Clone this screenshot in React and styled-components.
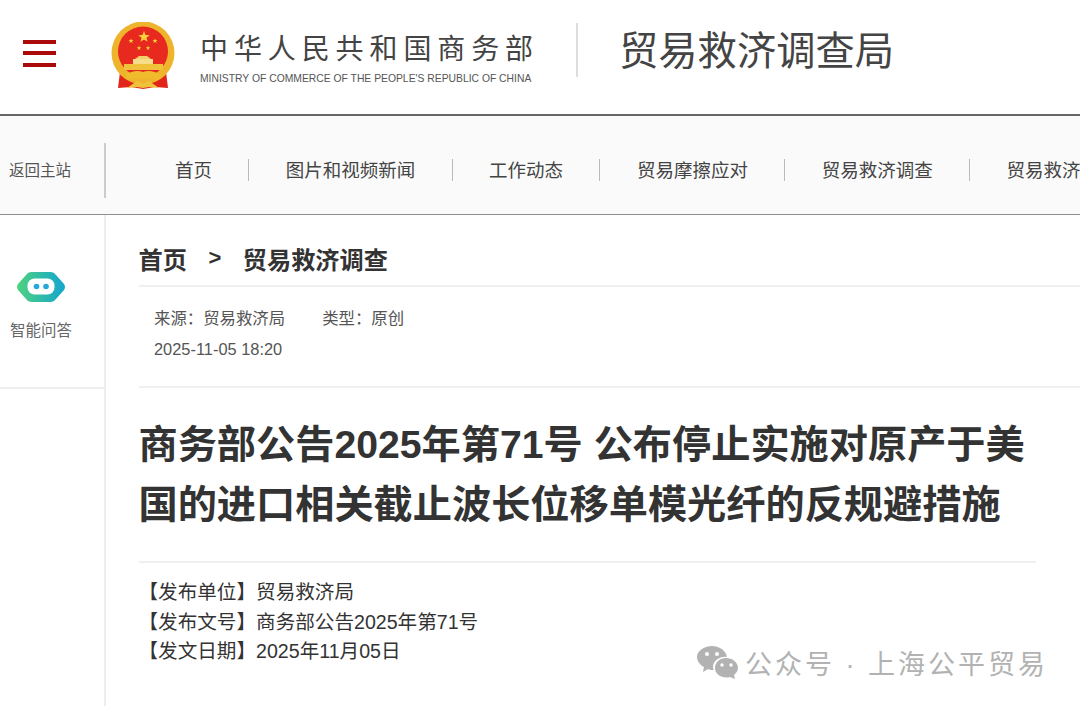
import React from 'react';
import styled, { createGlobalStyle } from 'styled-components';

const CJK = `"Liberation Sans", "Noto Sans CJK SC", sans-serif`;

const GlobalStyle = createGlobalStyle`
	html, body {
		margin: 0;
		padding: 0;
		background: #fff;
		overflow: hidden;
	}
	body {
		font-family: ${CJK};
		color: #333;
	}
`;

const Page = styled.div`
	position: relative;
	width: 1080px;
	height: 706px;
	overflow: hidden;
`;

const Header = styled.header`
	display: flex;
	align-items: center;
	height: 116px;
	box-sizing: border-box;
	padding-left: 23px;
	border-bottom: 2px solid #666;
`;

const Burger = styled.div`
	display: flex;
	flex-direction: column;
	gap: 7.5px;
	width: 33px;
	margin: 0 55px 8px 0;

	span {
		height: 4px;
		background: #ab0a0a;
	}
`;

const EmblemWrap = styled.div`
	display: flex;
	margin-bottom: 2px;
`;

const Brand = styled.div`
	width: 336px;
	margin: 4px 0 0 25px;

	.cn {
		font-size: 28px;
		line-height: 36px;
		letter-spacing: 5.9px;
		color: #444;
		white-space: nowrap;
	}

	.en {
		font-size: 10.35px;
		line-height: 14px;
		margin-top: 4px;
		color: #555;
		white-space: nowrap;
	}
`;

const Divider = styled.div`
	width: 2px;
	height: 54px;
	background: #ddd;
	margin: 0 41px 14px 40px;
`;

const Bureau = styled.div`
	font-size: 39.3px;
	color: #444;
	white-space: nowrap;
	margin-bottom: 20px;
`;

const Nav = styled.nav`
	display: flex;
	align-items: center;
	height: 99px;
	box-sizing: border-box;
	padding-top: 10px;
	background: #fafafa;
	border-bottom: 1px solid #8f8f8f;
	overflow: hidden;
`;

const Home = styled.div`
	display: flex;
	align-items: center;
	width: 106px;
	height: 55px;
	flex: none;
	box-sizing: border-box;
	padding: 0 0 2px 9px;
	border-right: 2px solid #ccc;
	font-size: 15.5px;
	color: #555;
`;

const NavList = styled.div`
	display: flex;
	align-items: center;
	padding-left: 32.6px;
`;

const NavItem = styled.div`
	flex: none;
	padding: 2px 36.4px 0;
	font-size: 18.5px;
	line-height: 20px;
	color: #444;
	white-space: nowrap;

	& + & {
		border-left: 1px solid #bbb;
	}
`;

const Body = styled.div`
	display: flex;
`;

const Side = styled.aside`
	width: 106px;
	height: 492px;
	flex: none;
	box-sizing: border-box;
	border-right: 2px solid #eee;
`;

const SideItem = styled.div`
	display: flex;
	flex-direction: column;
	align-items: center;
	height: 174px;
	box-sizing: border-box;
	padding: 57px 22px 0 0;
	border-bottom: 2px solid #eee;
	font-size: 15.5px;
	color: #666;

	svg {
		margin-bottom: 16px;
	}
`;

const Main = styled.main`
	flex: 1;
	padding: 0 44px 0 32.5px;
`;

const Crumbs = styled.div`
	display: flex;
	align-items: center;
	height: 72px;
	box-sizing: border-box;
	padding-top: 16px;
	border-bottom: 2px solid #f0f0f0;
	margin-right: -44px;
	font-size: 24.2px;
	font-weight: 700;
	color: #333;

	.sep {
		margin: 0 21.5px;
		font-size: 22px;
	}
`;

const Meta = styled.div`
	height: 101px;
	box-sizing: border-box;
	padding: 16px 0 0 15.5px;
	border-bottom: 2px solid #f0f0f0;
	margin-right: -44px;
	font-size: 16.4px;
	line-height: 31px;
	color: #555;

	span + span {
		margin-left: 37px;
	}
`;

const Title = styled.h1`
	margin: 0;
	padding: 27px 0 26px;
	border-bottom: 2px solid #f0f0f0;
	font-size: 39.2px;
	line-height: 60px;
	font-weight: 700;
	color: #333;
`;

const Info = styled.div`
	padding-top: 15px;
	font-size: 19.6px;
	line-height: 29.5px;
	color: #333;
`;

const Watermark = styled.div`
	position: absolute;
	left: 697px;
	top: 643px;
	display: flex;
	align-items: center;
	gap: 7px;
	font-size: 27px;
	letter-spacing: 3px;
	color: #b2b2b2;
	white-space: nowrap;
`;

function Star({ x, y, r }) {
	const pts = [];
	for (let i = 0; i < 10; i++) {
		const a = -Math.PI / 2 + (i * Math.PI) / 5;
		const rad = i % 2 ? r * 0.42 : r;
		pts.push(`${x + rad * Math.cos(a)},${y + rad * Math.sin(a)}`);
	}
	return <polygon points={pts.join(' ')} fill="#f6d33c" />;
}

function Emblem() {
	return (
		<svg width="64" height="68" viewBox="0 0 64 68">
			<path d="M9 50 L7 66 L20 65 L32 67 L44 65 L57 66 L55 50 Z" fill="#e1251b" />
			<circle cx="32" cy="31" r="31.5" fill="#eeb52c" />
			<circle cx="32" cy="29.5" r="25" fill="#e8291f" />
			<Star x={33} y={15} r={6} />
			<Star x={20} y={19} r={2.6} />
			<Star x={44} y={19} r={2.6} />
			<Star x={28} y={26} r={2.4} />
			<Star x={37} y={26} r={2.4} />
			<path d="M24 37 L28 34 H36 L40 37 Z" fill="#f3cf6c" />
			<rect x="22" y="37" width="20" height="5" fill="#f7dc8a" />
			<rect x="13" y="42" width="39" height="6" fill="#f0c23c" />
			<path d="M14 53 Q24 47 32 50 Q40 47 50 53 L47 58 Q39 54 32 57 Q25 54 17 58 Z" fill="#f0bc2e" />
			<path d="M16 66 L26 59 L32 62 L38 59 L48 66 L38 65 L32 66 L26 65 Z" fill="#f0c23c" />
		</svg>
	);
}

function BotIcon() {
	return (
		<svg width="48" height="30" viewBox="0 0 48 30">
			<defs>
				<linearGradient id="bot" x1="0" x2="1" y1="0" y2="0">
					<stop offset="0" stopColor="#4fd27f" />
					<stop offset="1" stopColor="#14a6cf" />
				</linearGradient>
			</defs>
			<path d="M14 0 H34 Q37 0 39 3 L47 12 Q49 15 47 18 L39 27 Q37 30 34 30 H14 Q11 30 9 27 L1 18 Q-1 15 1 12 L9 3 Q11 0 14 0 Z" fill="url(#bot)" />
			<rect x="10.5" y="6.5" width="27" height="16" rx="7" fill="#fff" />
			<circle cx="19.5" cy="14.5" r="2.8" fill="#26a9d8" />
			<circle cx="29" cy="14.5" r="2.8" fill="#26a9d8" />
		</svg>
	);
}

function WeChat() {
	return (
		<svg width="41" height="34" viewBox="0 0 41 34">
			<path d="M15 0 C23 0 29 5 30 11 C23 10 16 15 16 21 C16 22 16 23 17 24 C15 24 13 24 11 23 L6 26 L7 21 C3 19 0 15 0 11 C0 5 7 0 15 0 Z" fill="#b2b2b2" />
			<path d="M29 12 C35 12 41 16 41 22 C41 25 39 27 37 29 L38 33 L33 31 C26 33 18 29 18 22 C18 16 23 12 29 12 Z" fill="#b2b2b2" />
			<circle cx="10" cy="8" r="2" fill="#fff" />
			<circle cx="20" cy="8" r="2" fill="#fff" />
			<circle cx="25" cy="19" r="1.7" fill="#fff" />
			<circle cx="34" cy="19" r="1.7" fill="#fff" />
		</svg>
	);
}

const navItems = ['首页', '图片和视频新闻', '工作动态', '贸易摩擦应对', '贸易救济调查', '贸易救济措施'];

export default function App() {
	return (
		<Page>
			<GlobalStyle />
			<Header>
				<Burger>
					<span />
					<span />
					<span />
				</Burger>
				<EmblemWrap>
					<Emblem />
				</EmblemWrap>
				<Brand>
					<div className="cn">中华人民共和国商务部</div>
					<div className="en">MINISTRY OF COMMERCE OF THE PEOPLE'S REPUBLIC OF CHINA</div>
				</Brand>
				<Divider />
				<Bureau>贸易救济调查局</Bureau>
			</Header>
			<Nav>
				<Home>返回主站</Home>
				<NavList>
					{navItems.map((item) => (
						<NavItem key={item}>{item}</NavItem>
					))}
				</NavList>
			</Nav>
			<Body>
				<Side>
					<SideItem>
						<BotIcon />
						智能问答
					</SideItem>
				</Side>
				<Main>
					<Crumbs>
						首页<span className="sep">&gt;</span>贸易救济调查
					</Crumbs>
					<Meta>
						<div>
							<span>来源：贸易救济局</span>
							<span>类型：原创</span>
						</div>
						<div>2025-11-05 18:20</div>
					</Meta>
					<Title>商务部公告2025年第71号 公布停止实施对原产于美国的进口相关截止波长位移单模光纤的反规避措施</Title>
					<Info>
						<div>【发布单位】贸易救济局</div>
						<div>【发布文号】商务部公告2025年第71号</div>
						<div>【发文日期】2025年11月05日</div>
					</Info>
				</Main>
			</Body>
			<Watermark>
				<WeChat />
				公众号 · 上海公平贸易
			</Watermark>
		</Page>
	);
}
